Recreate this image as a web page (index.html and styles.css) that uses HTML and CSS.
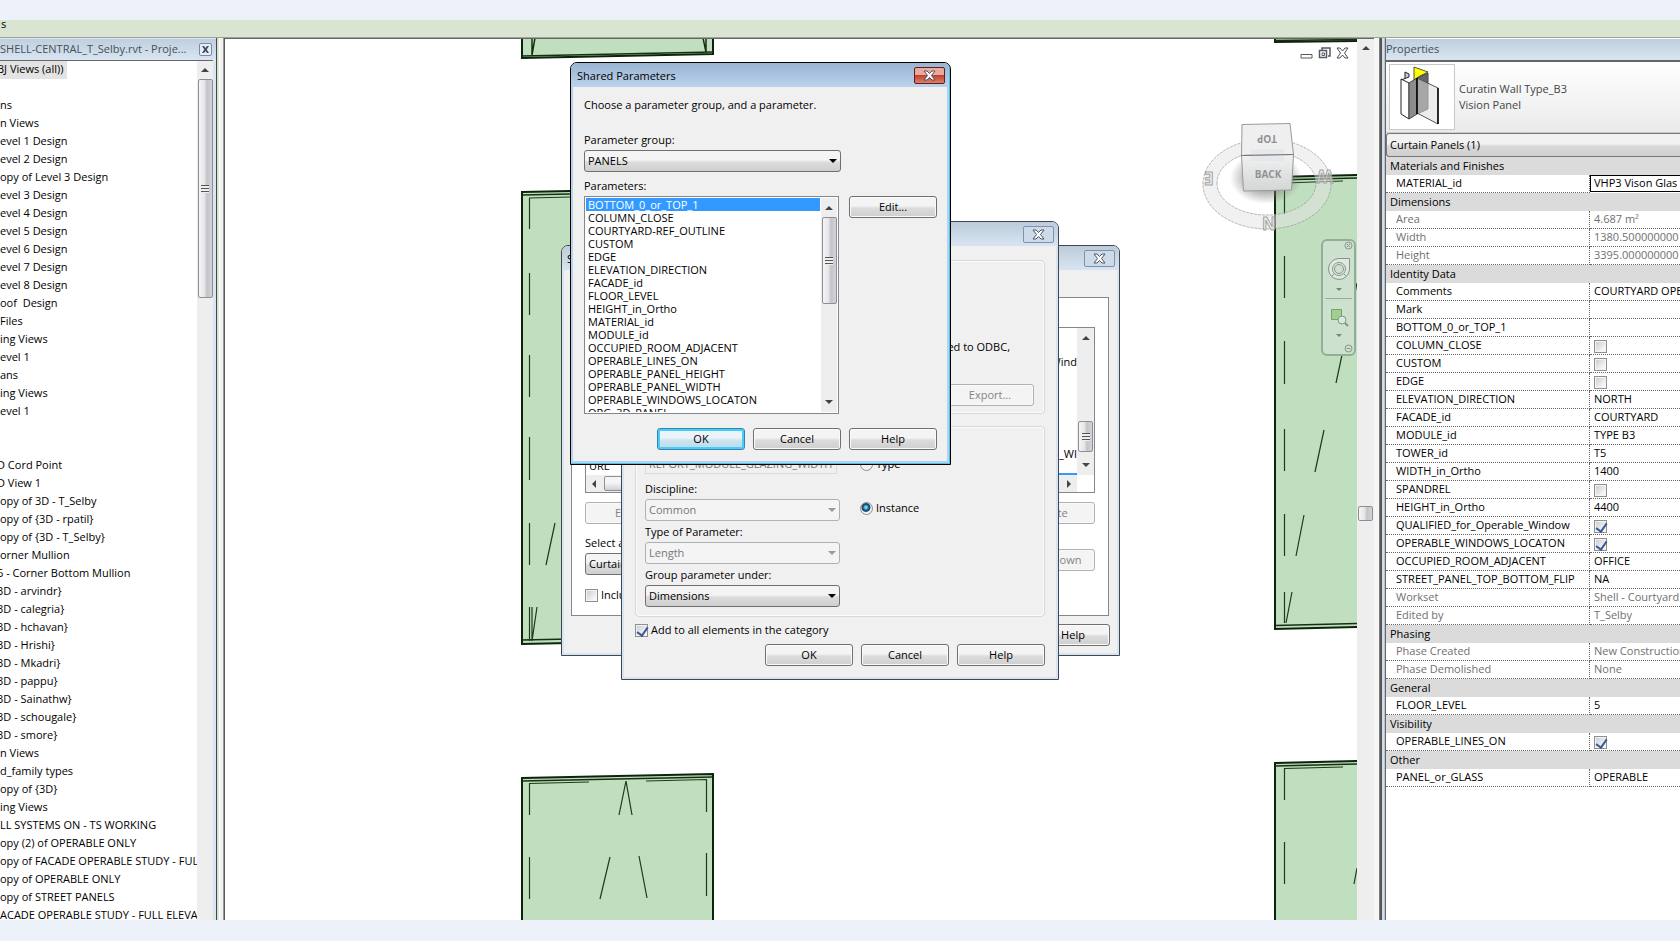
FILE: index.html
```
<!DOCTYPE html>
<html lang="en">
<head>
<meta charset="utf-8">
<title>Shared Parameters</title>
<link rel="stylesheet" href="styles.css">
</head>
<body>
<header class="top-strip"></header>
<div class="ribbon"><span>s</span></div>

<main class="workspace">
  <aside class="browser">
    <div class="panel-title"><span class="panel-name">SHELL-CENTRAL_T_Selby.rvt - Proje...</span>
      <button class="mini-close" aria-label="Close browser"><svg width="9" height="9" viewBox="0 0 9 9"><path d="M1 1h2l1.500 2L6 1h2L5.700 4.500 8 8H6L4.500 6 3 8H1l2.300-3.500z"/></svg></button>
    </div>
    <div class="browser-body">
      <ul class="tree">
        <li class="cut"><span class="current">BJ Views (all))</span></li>
        <li></li>
        <li>ns</li>
        <li>n Views</li>
        <li>evel 1 Design</li>
        <li>evel 2 Design</li>
        <li>opy of Level 3 Design</li>
        <li>evel 3 Design</li>
        <li>evel 4 Design</li>
        <li>evel 5 Design</li>
        <li>evel 6 Design</li>
        <li>evel 7 Design</li>
        <li>evel 8 Design</li>
        <li>oof&nbsp; Design</li>
        <li>Files</li>
        <li>ing Views</li>
        <li>evel 1</li>
        <li>ans</li>
        <li>ing Views</li>
        <li>evel 1</li>
        <li></li>
        <li></li>
        <li class="cut">D Cord Point</li>
        <li class="cut">D View 1</li>
        <li>opy of 3D - T_Selby</li>
        <li>opy of {3D - rpatil}</li>
        <li>opy of {3D - T_Selby}</li>
        <li>orner Mullion</li>
        <li class="cut">6 - Corner Bottom Mullion</li>
        <li class="cut">3D - arvindr}</li>
        <li class="cut">3D - calegria}</li>
        <li class="cut">3D - hchavan}</li>
        <li class="cut">3D - Hrishi}</li>
        <li class="cut">3D - Mkadri}</li>
        <li class="cut">3D - pappu}</li>
        <li class="cut">3D - Sainathw}</li>
        <li class="cut">3D - schougale}</li>
        <li class="cut">3D - smore}</li>
        <li>n Views</li>
        <li>d_family types</li>
        <li>opy of {3D}</li>
        <li>ing Views</li>
        <li>LL SYSTEMS ON - TS WORKING</li>
        <li>opy (2) of OPERABLE ONLY</li>
        <li>opy of FACADE OPERABLE STUDY - FULL</li>
        <li>opy of OPERABLE ONLY</li>
        <li>opy of STREET PANELS</li>
        <li>ACADE OPERABLE STUDY - FULL ELEVATION</li>
      </ul>
      <div class="vscroll tree-scroll"><i class="arrow up"></i><div class="thumb"><i class="grip"></i></div></div>
    </div>
  </aside>
  <div class="splitter left-split"></div>

  <section class="canvas">
    <svg class="drawing" width="1132" height="881" viewBox="225 39 1132 881">
      <g fill="#c0dfbe" stroke="#0c230c" stroke-width="2">
        <path d="M522 30V58L713 54V30z"/>
        <path d="M522 192L713 188V640L522 644z"/>
        <path d="M522 778L713 774V930H522z"/>
        <path d="M1275 30V42L1360 41V30z"/>
        <path d="M1275 177L1360 175V627L1275 629z"/>
        <path d="M1275 763L1360 761V930H1275z"/>
      </g>
      <g fill="none" stroke="#14300f" stroke-width="1.500">
        <path d="M522 56L713 52M532 30V55M535 38L532 55M703 38L706 52V30"/>
        <path d="M522 195L713 191M522 640L713 636"/>
        <path d="M522 781L713 777"/>
        <path d="M1275 40.500L1360 39.500M1275 180L1360 178M1275 625.500L1360 623.500M1275 766L1360 764"/>
      </g>
      <g fill="none" stroke="#1d3a1c" stroke-width="1.200">
        <path d="M571 197L529.500 198V229M529.500 273V315M529.500 355V397M529.500 437V480M529.500 523V565M555 523L546 565M537 607L532 641M529.500 607V641M532 641V607"/>
        <path d="M589 782L529.500 783.500V815M529.500 857V899M646 781L706.500 779.500V812M706.500 853V896M626 781L619 815M626 781L632 815M610 857L600 899M639 856L647 898"/>
        <path d="M1343 181L1284.500 183V214M1284.500 256V298M1284.500 341V384M1284.500 429V471M1284.500 514V556M1284.500 592V623M1357 283L1354 298M1345 341L1336 383M1324 430L1315 472M1304 515L1296 556M1292 592L1286 623"/>
        <path d="M1343 767L1284.500 768.500V800M1284.500 842V884M1357 868L1354 884"/>
      </g>
      <defs>
        <linearGradient id="cube" x1="0" y1="0" x2="0" y2="1"><stop offset="0" stop-color="#f1f1f1"/><stop offset="1" stop-color="#d3d6d6"/></linearGradient>
        <radialGradient id="shade"><stop offset=".5" stop-color="#777" stop-opacity=".6"/><stop offset="1" stop-color="#777" stop-opacity="0"/></radialGradient>
      </defs>
      <path fill="#e4e4e4" fill-opacity=".5" fill-rule="evenodd" stroke="#999" stroke-opacity=".7" stroke-dasharray="3 1" d="M1203 184a64 45 0 0 1 128 0a64 45 0 0 1-128 0zM1217 183a49.500 32 0 0 0 99 0a49.500 32 0 0 0-99 0z"/>
      <ellipse cx="1266" cy="178" rx="36" ry="26" fill="url(#shade)"/>
      <g stroke="#9a9a9a">
        <path d="M1242 124.500L1290 123.500L1293.500 154.500L1241.500 155.500z" fill="#efefef"/>
        <path d="M1241.500 155.500L1293.500 154.500L1291.500 190L1243.500 191z" fill="url(#cube)"/>
      </g>
      <path d="M1251 149h33v12h-33z" fill="#dfe3ea" opacity=".6"/>
      <path d="M1241.500 155.500L1293.500 154.500" stroke="#777"/>
      <g class="cube-text">
        <text x="1267" y="141" transform="rotate(180 1267 138)">TOP</text>
        <text x="1268" y="178">BACK</text>
      </g>
      <g class="compass-text">
        <text x="1209" y="184" transform="rotate(180 1209 178)">E</text>
        <text x="1269" y="230">N</text>
        <text x="1325" y="182" transform="rotate(180 1325 176)">W</text>
      </g>
    </svg>
    <div class="view-controls">
      <button aria-label="Minimize view"><svg width="13" height="12" viewBox="0 0 13 12"><path d="M1 7.500h11v3.500H1z" fill="#fff" stroke="#555b63"/></svg></button>
      <button aria-label="Restore view"><svg width="13" height="12" viewBox="0 0 13 12"><path d="M4 3V1h8v8h-2" fill="none" stroke="#555b63" stroke-width="1.500"/><path d="M1.500 3.500h7v7h-7z" fill="#fff" stroke="#555b63" stroke-width="1.500"/><path d="M4 6h2.500v2.500H4z" fill="none" stroke="#555b63"/></svg></button>
      <button aria-label="Close view"><svg width="13" height="12" viewBox="0 0 13 12"><path d="M1 1h3l2.500 3L9 1h3L8.500 6l3.500 5H9L6.500 8 4 11H1l3.500-5z" fill="#fff" stroke="#4b5057"/></svg></button>
    </div>
    <div class="nav-bar">
      <button class="nav-x" aria-label="Close navigation bar"><svg width="9" height="9" viewBox="0 0 9 9"><circle cx="4.500" cy="4.500" r="3.500"/><path d="M3 3l3 3M6 3L3 6"/></svg></button>
      <button aria-label="Steering wheel"><svg width="24" height="24" viewBox="0 0 24 24"><path d="M12 1.500h10.500V12A10.500 10.500 0 1 1 12 1.500z" fill="#dfe8e1"/><circle cx="12" cy="12" r="6.500"/><circle cx="12" cy="12" r="4.500" fill="#cfe0d0"/><path d="M5 19l2.500-2.500M19 19l-2.500-2.500"/></svg></button>
      <i class="nav-arrow"></i>
      <hr>
      <button aria-label="Zoom region"><svg width="20" height="20" viewBox="0 0 20 20"><path d="M2.500 2.500h10v10h-10z" fill="#a3cd92" stroke="#74a367"/><circle cx="13" cy="13" r="4" fill="#dbe9dc"/><path d="M16 16l3 3" stroke-width="2"/></svg></button>
      <i class="nav-arrow"></i>
      <button class="nav-x" aria-label="Navigation options"><svg width="9" height="9" viewBox="0 0 9 9"><circle cx="4.500" cy="4.500" r="3.500"/><path d="M2.500 4.500h4"/></svg></button>
    </div>
  </section>
  <div class="vscroll view-scroll"><i class="arrow up"></i><div class="thumb"></div></div>
  <div class="splitter right-split"></div>

  <aside class="properties">
    <div class="panel-title"><span class="panel-name">Properties</span></div>
    <div class="properties-body">
      <div class="type-row">
        <div class="type-thumb">
          <svg width="64" height="64" viewBox="0 0 64 64">
            <path d="M24 2l14 5-8 4-6 4z" fill="#ff0" stroke="#554"/>
            <path d="M11 15l8-3V9l-4-2v6" fill="#ccc" stroke="#222"/>
            <path d="M11 14l8 4v36l-8-5z" fill="#fff" stroke="#222"/>
            <path d="M19 18l8-5v36l-8 5z" fill="#8c8c8c" stroke="#444"/>
            <path d="M27 13l11-5v36l-11 5z" fill="#666" stroke="#444"/>
            <path d="M27 13l21 10v36L27 48z" fill="#ddd" fill-opacity=".55" stroke="#555"/>
            <path d="M27 13v36M48 23v36" stroke="#000" stroke-width="1.500"/>
          </svg>
        </div>
        <p>Curatin Wall Type_B3<br>Vision Panel</p>
      </div>
      <select class="filter" aria-label="Element filter"><option>Curtain Panels (1)</option></select>
      <table class="props">
        <colgroup><col class="name-col"><col></colgroup>
        <tbody>
        <tr><th colspan="2">Materials and Finishes</th></tr>
        <tr><td>MATERIAL_id</td><td class="editing"><input type="text" aria-label="MATERIAL_id" value="VHP3 Vison Glass"></td></tr>
        <tr><th colspan="2">Dimensions</th></tr>
        <tr class="dim"><td>Area</td><td>4.687 m²</td></tr>
        <tr class="dim"><td>Width</td><td>1380.500000000</td></tr>
        <tr class="dim"><td>Height</td><td>3395.000000000</td></tr>
        <tr><th colspan="2">Identity Data</th></tr>
        <tr><td>Comments</td><td>COURTYARD OPERABLE</td></tr>
        <tr><td>Mark</td><td></td></tr>
        <tr><td>BOTTOM_0_or_TOP_1</td><td></td></tr>
        <tr><td>COLUMN_CLOSE</td><td><input type="checkbox" aria-label="COLUMN_CLOSE"></td></tr>
        <tr><td>CUSTOM</td><td><input type="checkbox" aria-label="CUSTOM"></td></tr>
        <tr><td>EDGE</td><td><input type="checkbox" aria-label="EDGE"></td></tr>
        <tr><td>ELEVATION_DIRECTION</td><td>NORTH</td></tr>
        <tr><td>FACADE_id</td><td>COURTYARD</td></tr>
        <tr><td>MODULE_id</td><td>TYPE B3</td></tr>
        <tr><td>TOWER_id</td><td>T5</td></tr>
        <tr><td>WIDTH_in_Ortho</td><td>1400</td></tr>
        <tr><td>SPANDREL</td><td><input type="checkbox" aria-label="SPANDREL"></td></tr>
        <tr><td>HEIGHT_in_Ortho</td><td>4400</td></tr>
        <tr><td>QUALIFIED_for_Operable_Window</td><td><input type="checkbox" checked aria-label="QUALIFIED_for_Operable_Window"></td></tr>
        <tr><td>OPERABLE_WINDOWS_LOCATON</td><td><input type="checkbox" checked aria-label="OPERABLE_WINDOWS_LOCATON"></td></tr>
        <tr><td>OCCUPIED_ROOM_ADJACENT</td><td>OFFICE</td></tr>
        <tr><td>STREET_PANEL_TOP_BOTTOM_FLIP</td><td>NA</td></tr>
        <tr class="dim"><td>Workset</td><td>Shell - Courtyard</td></tr>
        <tr class="dim"><td>Edited by</td><td>T_Selby</td></tr>
        <tr><th colspan="2">Phasing</th></tr>
        <tr class="dim"><td>Phase Created</td><td>New Construction</td></tr>
        <tr class="dim"><td>Phase Demolished</td><td>None</td></tr>
        <tr><th colspan="2">General</th></tr>
        <tr><td>FLOOR_LEVEL</td><td>5</td></tr>
        <tr><th colspan="2">Visibility</th></tr>
        <tr><td>OPERABLE_LINES_ON</td><td><input type="checkbox" checked aria-label="OPERABLE_LINES_ON"></td></tr>
        <tr><th colspan="2">Other</th></tr>
        <tr><td>PANEL_or_GLASS</td><td>OPERABLE</td></tr>
        </tbody>
      </table>
    </div>
  </aside>
</main>
<footer class="bottom-strip"></footer>

<section class="window schedule" aria-label="Schedule Properties">
  <header><span>S</span><button class="close" aria-label="Close"><svg width="13" height="11" viewBox="0 0 13 11"><path d="M1 1h3l2.500 2.500L9 1h3L8.500 5.500 12 10H9L6.500 7.500 4 10H1l3.500-4.500z"/></svg></button></header>
  <div class="tab-page">
    <div class="fields">
      <div class="fields-text">
        <div class="available"><span>URL</span></div>
        <div class="scheduled"><span>Wind</span><span>_WI</span></div>
      </div>
      <div class="vscroll"><i class="arrow up"></i><div class="thumb"><i class="grip"></i></div><i class="arrow down"></i></div>
      <div class="hscroll"><i class="arrow prev"></i><div class="thumb"></div><i class="arrow next"></i></div>
    </div>
    <div class="pair"><button class="btn" disabled>Edit...</button><button class="btn" disabled>Delete</button></div>
    <div class="pair lower">
      <div class="field category"><label for="cat">Select a</label>
        <span class="combo"><select id="cat"><option>Curtain Panels</option></select></span></div>
      <button class="btn" disabled>Move Down</button>
    </div>
    <label class="check"><input type="checkbox"> Include</label>
  </div>
  <div class="actions"><button class="btn">Help</button></div>
</section>

<section class="window parameter" aria-label="Parameter Properties">
  <header><button class="close" aria-label="Close"><svg width="13" height="11" viewBox="0 0 13 11"><path d="M1 1h3l2.500 2.500L9 1h3L8.500 5.500 12 10H9L6.500 7.500 4 10H1l3.500-4.500z"/></svg></button></header>
  <div class="group source"><p>ed to ODBC,</p><button class="btn" disabled>Export...</button></div>
  <div class="group data">
    <div class="data-fields">
      <input class="name-box" type="text" disabled aria-label="Name" value="REPORT_MODULE_GLAZING_WIDTH">
      <div class="field"><label for="disc">Discipline:</label><span class="combo off"><select id="disc" disabled><option>Common</option></select></span></div>
      <div class="field"><label for="ptype">Type of Parameter:</label><span class="combo off"><select id="ptype" disabled><option>Length</option></select></span></div>
      <div class="field"><label for="under">Group parameter under:</label><span class="combo"><select id="under"><option>Dimensions</option></select></span></div>
    </div>
    <div class="radios">
      <label class="check"><input type="radio" name="scope"> Type</label>
      <label class="check"><input type="radio" name="scope" checked> Instance</label>
    </div>
  </div>
  <label class="check add-all"><input type="checkbox" checked> Add to all elements in the category</label>
  <div class="actions"><button class="btn">OK</button><button class="btn">Cancel</button><button class="btn">Help</button></div>
</section>

<section class="window shared" aria-label="Shared Parameters">
  <header><span>Shared Parameters</span><button class="close" aria-label="Close"><svg width="13" height="11" viewBox="0 0 13 11"><path d="M1 1h3l2.500 2.500L9 1h3L8.500 5.500 12 10H9L6.500 7.500 4 10H1l3.500-4.500z"/></svg></button></header>
  <div class="shared-body">
    <p class="intro">Choose a parameter group, and a parameter.</p>
    <div class="field group-field"><label for="pgroup">Parameter group:</label><span class="combo"><select id="pgroup"><option>PANELS</option></select></span></div>
    <p class="list-label" id="plabel">Parameters:</p>
    <div class="list-row">
      <div class="listbox">
        <ul role="listbox" aria-labelledby="plabel">
          <li role="option" aria-selected="true">BOTTOM_0_or_TOP_1</li>
          <li role="option">COLUMN_CLOSE</li>
          <li role="option">COURTYARD-REF_OUTLINE</li>
          <li role="option">CUSTOM</li>
          <li role="option">EDGE</li>
          <li role="option">ELEVATION_DIRECTION</li>
          <li role="option">FACADE_id</li>
          <li role="option">FLOOR_LEVEL</li>
          <li role="option">HEIGHT_in_Ortho</li>
          <li role="option">MATERIAL_id</li>
          <li role="option">MODULE_id</li>
          <li role="option">OCCUPIED_ROOM_ADJACENT</li>
          <li role="option">OPERABLE_LINES_ON</li>
          <li role="option">OPERABLE_PANEL_HEIGHT</li>
          <li role="option">OPERABLE_PANEL_WIDTH</li>
          <li role="option">OPERABLE_WINDOWS_LOCATON</li>
          <li role="option">ORG_3D_PANEL</li>
        </ul>
        <div class="vscroll"><i class="arrow up"></i><div class="thumb"><i class="grip"></i></div><i class="arrow down"></i></div>
      </div>
      <button class="btn">Edit...</button>
    </div>
    <div class="actions"><button class="btn default">OK</button><button class="btn">Cancel</button><button class="btn">Help</button></div>
  </div>
</section>
</body>
</html>
```
FILE: styles.css
```
* { box-sizing: border-box; }
body {
  margin: 0;
  height: 100vh;
  display: flex;
  flex-direction: column;
  overflow: hidden;
  background: #fff;
  color: #000;
  font: 11px/18px "Open Sans", "Noto Sans", sans-serif;
}
p, ul { margin: 0; padding: 0; }
ul { list-style: none; }
button, input, select { font: inherit; color: inherit; margin: 0; }
button { padding: 0; border: 0; background: none; }
svg { display: block; }

.top-strip { flex: 0 0 20px; background: #edf2fa; }
.bottom-strip { flex: 0 0 21px; background: #edf2fa; }
.ribbon { flex: 0 0 18px; background: #d9e4d1; border-bottom: 1px solid #a0a0a0; line-height: 8px; padding-left: 1px; }
.workspace { flex: 1; min-height: 0; display: flex; }

/* docked panels */
.panel-title {
  height: 21px;
  display: flex;
  align-items: center;
  justify-content: space-between;
  padding-bottom: 1px;
  background: linear-gradient(#bfcfdd, #d9e5f2);
  color: #474f59;
  white-space: nowrap;
}
.mini-close { flex: none; width: 13px; height: 13px; margin-right: 4px; border: 1px solid #7a88a8; border-radius: 2px; background: #e6edf6; padding: 1px; }
.mini-close svg { fill: #444b5c; }

.browser { flex: 0 0 216px; min-width: 0; display: flex; flex-direction: column; padding-top: 1px; background: #d9e5f2; }
.browser-body { flex: 1; min-height: 0; display: flex; margin-right: 3px; border-top: 1px solid #666; background: #fff; }
.tree { flex: 1; min-width: 0; overflow: hidden; white-space: nowrap; line-height: 16px; }
.tree li { height: 18px; }
.tree .cut { margin-left: -3px; }
.current { display: inline-block; height: 18px; padding-right: 4px; background: #e3e3e3; }

.splitter { flex: none; }
.left-split { width: 9px; border-left: 1px solid #444; background: linear-gradient(90deg, #d9e4d1 2px, #fff 2px 3px, #f0f0f0 3px 6px, #999 6px 7px, #5a5a5a 7px); }
.right-split { width: 12px; background: linear-gradient(90deg, #f6f6f6 5px, #7c7c7c 5px 6px, #555 6px 8px, #d4dfec 8px 10px, #b6c4d4 10px 11px, #666 11px); }

/* scroll bars */
.vscroll { flex: 0 0 16px; display: flex; flex-direction: column; align-items: center; background: #eee; }
.hscroll { display: flex; align-items: center; background: #eee; }
.thumb { display: flex; align-items: center; justify-content: center; border: 1px solid #8d8f94; border-radius: 2px; background: linear-gradient(90deg, #f5f5f5, #e4e4e6 45%, #c2c2c8 60%, #d4d4d8); }
.vscroll .thumb { width: 15px; }
.grip { width: 8px; height: 8px; background: repeating-linear-gradient(#555 0 1px, #eee 1px 3px); }
.arrow { width: 0; height: 0; border: 4px solid transparent; }
.arrow.up { border-top: 0; border-bottom-color: #444; }
.arrow.down { border-bottom: 0; border-top-color: #444; }
.arrow.prev { border-left: 0; border-right-color: #444; }
.arrow.next { border-right: 0; border-left-color: #444; }
.tree-scroll .up { margin: 7px 0; }
.tree-scroll .thumb { height: 219px; }
.view-scroll { flex-basis: 17px; border-top: 1px solid #666; }
.view-scroll .up { margin-top: 7px; }
.view-scroll .thumb { height: 15px; margin-top: 456px; }

/* drawing area */
.canvas { position: relative; flex: 1; min-width: 0; overflow: hidden; border-top: 1px solid #666; background: #fff; }
.cube-text, .compass-text { font-family: "Open Sans", sans-serif; font-weight: 700; text-anchor: middle; }
.cube-text { font-size: 10px; fill: #8f9396; }
.compass-text { font-size: 17px; fill: #ececec; fill-opacity: .5; stroke: #999; stroke-opacity: .9; }
.view-controls { position: absolute; top: 8px; right: 8px; display: flex; gap: 5px; }
.nav-bar {
  position: absolute; top: 200px; right: 1px;
  width: 35px; height: 117px;
  display: flex; flex-direction: column; align-items: center; justify-content: space-between;
  padding-bottom: 1px;
  border: 2px solid #92ae94; border-radius: 6px;
  background: #cce1ce;
}
.nav-bar svg { fill: none; stroke: #84968a; }
.nav-bar hr { width: 27px; margin: 0; border: 0; border-top: 1px solid #97ad99; }
.nav-x { align-self: flex-end; margin-right: 1px; }
.nav-arrow { border: 3px solid transparent; border-top-color: #72867a; border-bottom: 0; }

/* properties */
.properties { flex: 0 0 294px; padding-top: 1px; overflow: hidden; background: #fff; }
.properties-body { border-top: 2px solid #666; }
.type-row { display: flex; align-items: center; gap: 4px; height: 71px; padding: 2px 3px 3px; border-bottom: 1px solid #ccc; background: linear-gradient(#fff, #eaeaea); color: #444; line-height: 16px; }
.type-thumb { width: 66px; height: 66px; border: 1px solid #c8c8c8; background: #fff; }
.filter { appearance: none; display: block; width: 100%; height: 24px; margin: 0; padding: 0 3px; border: 1px solid #777; border-right: 0; border-radius: 3px 0 0 3px; background: linear-gradient(#f2f2f2 45%, #d9d9d9 55%, #cfcfcf); }
.props { width: 100%; table-layout: fixed; border-spacing: 0; white-space: nowrap; }
.name-col { width: 204px; }
.props th, .props td { height: 18px; padding: 0; text-align: left; vertical-align: top; font-weight: 400; }
.props th { background: #dbdbdb; padding-left: 4px; line-height: 18px; }
.props td { padding-left: 4px; border-bottom: 1px dotted #666; line-height: 15px; }
.props td:first-child { padding-left: 10px; border-right: 1px dotted #666; }
.props .dim { color: #707070; }
.props .editing { padding: 0; border: 0; }
.editing input { display: block; width: 100%; height: 17px; padding: 0 3px 2px; border: 1px solid #000; border-right: 0; background: #fff; line-height: 13px; }

/* form controls */
input[type="checkbox"] { appearance: none; position: relative; flex: none; display: block; width: 13px; height: 13px; border: 1px solid #8e8f8f; background: linear-gradient(135deg, #c4c9d0, #f8f8f8 80%); box-shadow: inset 0 0 0 1px #f4f4f4; }
.props input[type="checkbox"] { margin-top: 3px; }
input[type="checkbox"]:checked::after { content: ""; position: absolute; left: 3px; top: 0; width: 5px; height: 9px; border: solid #3f5a9b; border-width: 0 2px 2px 0; transform: rotate(35deg); }
input[type="radio"] { appearance: none; flex: none; width: 13px; height: 13px; border: 1px solid #8e8f8f; border-radius: 50%; background: #f2f2f2; }
input[type="radio"]:checked { background: radial-gradient(circle at 45% 40%, #7cd0f0 0 1px, #14507a 3px 4px, #f2f2f2 5px); }
.check { display: flex; align-items: center; gap: 3px; }
.btn { width: 88px; height: 22px; border: 1px solid #707070; border-radius: 3px; background: linear-gradient(#f4f4f4 45%, #dcdcdc 55%, #cfcfcf); box-shadow: inset 0 0 0 1px #fafafa; line-height: 18px; }
.btn:disabled { border-color: #adb2b5; background: #f4f4f4; color: #838383; }
.btn.default { border-color: #3c7fb1; background: linear-gradient(#eaf4f9 45%, #cfe5f0 55%, #bcd9e8); box-shadow: inset 0 0 0 2px #40d0f8; }
.actions { display: flex; justify-content: flex-end; gap: 8px; }
.field { display: grid; }
.field label, .list-label { padding-bottom: 1px; line-height: 18px; }
.combo { position: relative; display: block; }
.combo select { appearance: none; display: block; width: 100%; height: 22px; padding: 0 3px; border: 1px solid #707070; border-radius: 3px; background: linear-gradient(#f4f4f4 45%, #dcdcdc 55%, #cfcfcf); opacity: 1; }
.combo::after { content: ""; position: absolute; right: 4px; top: 9px; border: 4px solid transparent; border-top-color: #000; border-bottom: 0; }
.combo.off select { border-color: #adb2b5; background: #f4f4f4; color: #777; }
.combo.off::after { border-top-color: #999; }

/* floating windows */
.window { position: absolute; border: 1px solid #42464e; border-radius: 7px 7px 0 0; background: #f0f0f0; box-shadow: inset -2px -2px #d8e4f1, inset 2px 0 #d8e4f1; }
.window > header { display: flex; align-items: flex-start; justify-content: space-between; height: 24px; padding: 4px 4px 0 5px; border-radius: 6px 6px 0 0; background: linear-gradient(#bccbda, #d8e4f1); }
.close { display: flex; align-items: center; justify-content: center; width: 31px; height: 17px; margin-left: auto; border: 1px solid #8190ad; border-radius: 2px; background: #ccdaea; }
.close svg { fill: #fff; stroke: #4c5263; }

.schedule { left: 561px; top: 245px; width: 559px; padding-bottom: 9px; }
.tab-page { margin: 27px 10px 0 9px; padding: 29px 13px 11px; border: 1px solid #828790; background: #fff; }
.fields { display: grid; grid-template-columns: 1fr 17px; grid-template-rows: 147px 17px; border: 1px solid #828790; }
.fields-text { display: flex; justify-content: space-between; line-height: 14px; }
.available { align-self: flex-end; padding: 0 3px 2px; }
.scheduled { display: flex; flex-direction: column; justify-content: space-between; align-items: flex-end; padding: 27px 0 12px; border-bottom: 2px solid #3399ff; }
.fields .vscroll { padding: 8px 0; }
.fields .vscroll .thumb { height: 31px; margin: auto 0 11px; }
.fields .hscroll { grid-column: 1; padding: 0 6px; }
.fields .hscroll .thumb { width: 60px; height: 15px; margin: 0 auto 0 8px; background: linear-gradient(#f5f5f5 45%, #d0d0d4); }
.pair { display: flex; justify-content: space-between; align-items: flex-start; margin-top: 9px; }
.pair.lower { margin-top: 25px; }
.pair .category { width: 200px; margin-top: -15px; }
.tab-page .check { margin-top: 11px; }
.schedule .actions { margin: 8px 9px 0; }
.schedule .actions .btn { width: 74px; }

.parameter { left: 621px; top: 221px; width: 438px; padding-bottom: 13px; }
.group { margin: 14px 13px 0; border: 1px solid #d0dae4; border-radius: 4px; box-shadow: inset 0 0 0 1px #fbfbfb; }
.source { display: flex; flex-direction: column; align-items: flex-end; gap: 28px; padding: 77px 10px 7px; }
.source p { padding-right: 24px; }
.data { display: grid; grid-template-columns: 195px auto; justify-content: start; gap: 20px; margin-top: 12px; padding: 25px 9px 9px; }
.data-fields { display: grid; gap: 2px; }
.name-box { width: 192px; height: 22px; margin-bottom: 4px; padding: 0 3px; border: 1px solid #d4dbe2; background: #f0f0f0; color: #777; }
.radios { display: flex; flex-direction: column; gap: 26px; padding-top: 3px; }
.add-all { margin: 4px 13px 5px; }
.parameter .actions { margin: 0 13px; }

.shared { left: 570px; top: 62px; width: 381px; border-color: #000; box-shadow: inset -1px -1px #48c4ec, inset -3px -3px #b9d1ea, inset 2px 0 #b9d1ea; padding-bottom: 14px; }
.shared > header { padding-left: 6px; background: linear-gradient(#99b4d1, #bcd2ec); margin-right: 1px; }
.shared .close { border-color: #5a2020; background: linear-gradient(#eba99d 45%, #c2412c 50%, #d9806c); }
.shared-body { padding: 9px 13px 0; }
.group-field { width: 257px; margin-top: 17px; }
.list-label { margin-top: 5px; }
.list-row { display: flex; align-items: flex-start; justify-content: space-between; }
.listbox { display: flex; width: 255px; height: 218px; padding: 1px; border: 1px solid #828790; background: #fff; overflow: hidden; }
.listbox ul { flex: 1; overflow: hidden; line-height: 13px; }
.listbox li { height: 13px; padding-left: 2px; }
.listbox li[aria-selected] { background: #3399ff; color: #fff; }
.listbox .vscroll { padding: 8px 0; margin-left: 1px; }
.listbox .thumb { height: 87px; margin: 7px 0 auto; }
.shared .actions { margin-top: 14px; }
```
